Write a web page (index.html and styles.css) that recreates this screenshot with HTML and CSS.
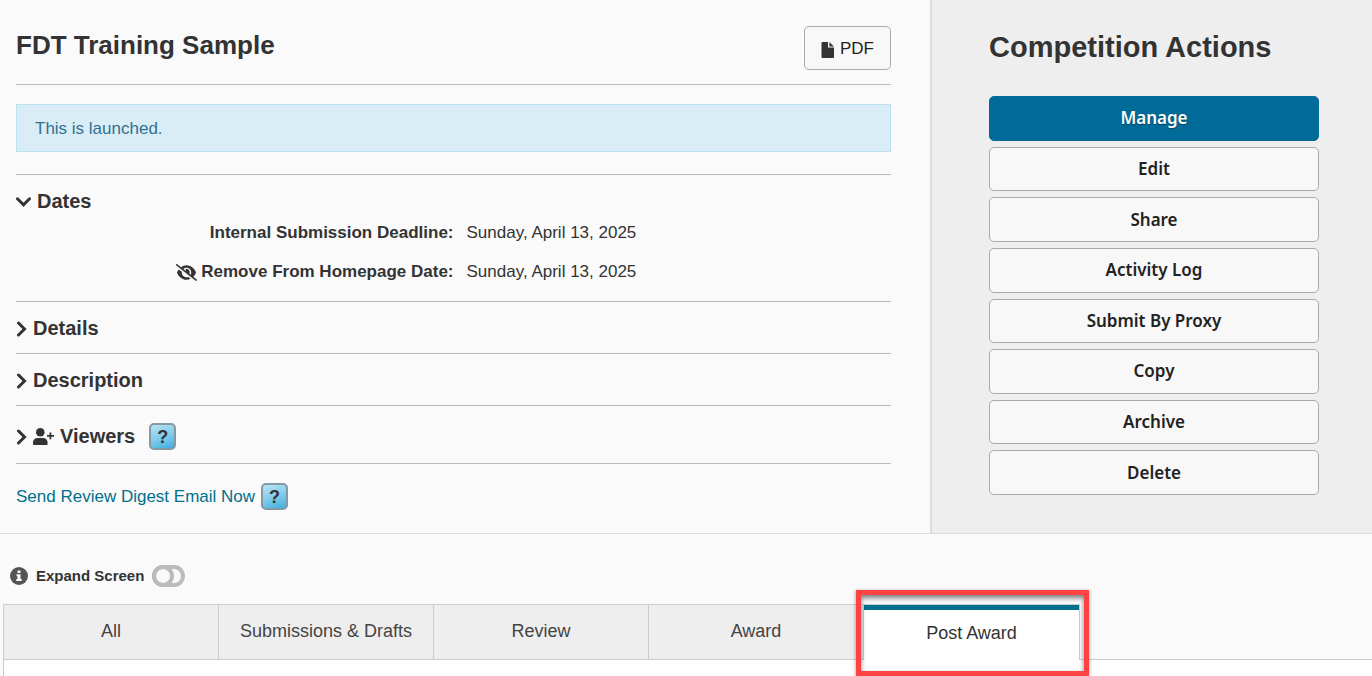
FILE: index.html
```html
<!DOCTYPE html>
<html lang="en">
<head>
    <meta charset="UTF-8">
    <meta name="viewport" content="width=device-width, initial-scale=1">
    <title>FDT Training Sample</title>
    <link rel="stylesheet" href="styles.css">
</head>
<body>
<div class="competition">
    <main class="overview">
        <header class="title-bar">
            <h1>FDT Training Sample</h1>
            <button type="button" class="btn btn-pdf">
                <svg class="icon-file" viewBox="0 0 13 16" aria-hidden="true">
                    <path d="M1.500 0H7v5.500h6v9.500a1 1 0 0 1-1 1H1.500a1 1 0 0 1-1-1V1a1 1 0 0 1 1-1z"/>
                    <path d="M8.300 0L13 4.400H8.300z"/>
                </svg>
                PDF
            </button>
        </header>

        <div class="alert">This is launched.</div>

        <section class="section section-dates">
            <h2>
                <svg class="chevron-down" viewBox="0 0 15 10" aria-hidden="true"><path d="M1.500 1.800l6 6 6-6"/></svg>
                Dates
            </h2>
            <dl class="dates">
                <dt>Internal Submission Deadline:</dt>
                <dd>Sunday, April 13, 2025</dd>
                <dt>
                    <svg class="icon-eye" viewBox="0 0 640 512" aria-hidden="true">
                        <path d="M39 5C28-3 13-1 5 9S-1 35 9 43l592 464c10 8 26 6 34-4s6-26-4-34L526 387c39-41 66-86 79-119 3-8 3-17 0-25-15-36-46-88-93-131C465 68 401 32 320 32c-68 0-125 26-169 61L39 5zm184 144c25-23 60-37 97-37 80 0 144 64 144 144 0 25-6 48-17 69l-38-30c9-23 11-50 3-77-13-50-62-81-111-74-5 1-7 6-5 11 2 6 3 13 3 21 0 10-2 20-7 29l-69-56zm150 241c-17 7-34 10-53 10-80 0-144-64-144-144 0-7 1-14 2-20l-95-74c-23 29-39 58-48 81-3 8-3 17 0 25 15 36 46 88 93 131 47 44 111 81 192 81 47 0 89-13 126-32l-73-58z"/>
                    </svg>
                    Remove From Homepage Date:
                </dt>
                <dd>Sunday, April 13, 2025</dd>
            </dl>
        </section>

        <section class="section">
            <h2>
                <svg class="chevron-right" viewBox="0 0 11 16" aria-hidden="true"><path d="M2.500 2l6 6-6 6"/></svg>
                Details
            </h2>
        </section>

        <section class="section">
            <h2>
                <svg class="chevron-right" viewBox="0 0 11 16" aria-hidden="true"><path d="M2.500 2l6 6-6 6"/></svg>
                Description
            </h2>
        </section>

        <section class="section section-viewers">
            <h2>
                <svg class="chevron-right" viewBox="0 0 11 16" aria-hidden="true"><path d="M2.500 2l6 6-6 6"/></svg>
                <svg class="icon-user" viewBox="0 0 21 17" aria-hidden="true">
                    <circle cx="7.300" cy="4.300" r="4.300"/>
                    <path d="M4.500 10h5.600a4.500 4.500 0 0 1 4.500 4.500V16a1 1 0 0 1-1 1H1a1 1 0 0 1-1-1v-1.500A4.500 4.500 0 0 1 4.500 10z"/>
                    <path d="M16.500 4.500v2.500H14v1.700h2.500v2.500h1.800V8.700H21V7h-2.700V4.500z"/>
                </svg>
                Viewers
            </h2>
            <button type="button" class="help" aria-label="Help with viewers">?</button>
        </section>

        <div class="digest">
            <a href="#">Send Review Digest Email Now</a>
            <button type="button" class="help" aria-label="Help with review digest">?</button>
        </div>
    </main>

    <aside class="actions">
        <h2>Competition Actions</h2>
        <div class="action-list">
            <button type="button" class="btn btn-primary">Manage</button>
            <button type="button" class="btn">Edit</button>
            <button type="button" class="btn">Share</button>
            <button type="button" class="btn">Activity Log</button>
            <button type="button" class="btn">Submit By Proxy</button>
            <button type="button" class="btn">Copy</button>
            <button type="button" class="btn">Archive</button>
            <button type="button" class="btn">Delete</button>
        </div>
    </aside>
</div>

<div class="expand">
    <svg class="icon-info" viewBox="0 0 18 18" aria-hidden="true">
        <circle cx="9" cy="9" r="9"/>
        <path d="M7.500 3.500h3v2.500h-3zM6.500 7.300h4v4.700h1.200v2H6.300v-2h1.200V9.300h-1z"/>
    </svg>
    <label for="expandScreen">Expand Screen</label>
    <input type="checkbox" id="expandScreen" class="toggle">
</div>

<nav class="tabs" role="tablist">
    <button type="button" role="tab" class="tab">All</button>
    <button type="button" role="tab" class="tab">Submissions &amp; Drafts</button>
    <button type="button" role="tab" class="tab">Review</button>
    <button type="button" role="tab" class="tab">Award</button>
    <div class="tab-current">
        <button type="button" role="tab" class="tab tab-active" aria-selected="true">Post Award</button>
        <span class="highlight"></span>
    </div>
</nav>
<div class="tab-panel"></div>
</body>
</html>
```

FILE: styles.css
```css
*, *::before {
    box-sizing: border-box;
}
body {
    margin: 0;
    min-height: 100vh;
    display: flex;
    flex-direction: column;
    background-color: #fafafa;
    color: #333;
    font-family: "Liberation Sans", Arial, sans-serif;
    font-size: 17px;
    line-height: 20px;
}
h1, h2, dl, dd {
    margin: 0;
}
svg {
    flex: none;
    fill: #333;
}
button {
    font: inherit;
    color: inherit;
    cursor: pointer;
}

/* top area */
.competition {
    display: flex;
    border-bottom: 1px solid #ddd;
}
.overview {
    flex: 1;
    padding: 26px 39px 23px 16px;
}
.title-bar {
    display: flex;
    justify-content: space-between;
    align-items: center;
    padding-bottom: 14px;
    border-bottom: 1px solid #bbb;
}
.title-bar h1 {
    padding-bottom: 6px;
    font-size: 26px;
    line-height: 32px;
}
.btn {
    padding: 0 16px;
    border: 1px solid #aaa;
    border-radius: 5px;
    background-color: #f8f8f8;
    color: #222;
}
.btn-pdf {
    display: flex;
    align-items: center;
    gap: 6px;
    height: 44px;
    padding-top: 2px;
}
.icon-file {
    width: 13px;
    height: 16px;
    margin-top: 2px;
}
.alert {
    margin: 19px 0 22px;
    padding: 14px 18px 12px;
    border: 1px solid #bce1f1;
    background-color: #d9edf6;
    color: #31708f;
}

/* collapsible sections */
.section {
    display: flex;
    align-items: center;
    gap: 14px;
    padding: 14px 0 12px;
    border-top: 1px solid #bbb;
}
.section h2 {
    display: flex;
    align-items: center;
    gap: 6px;
    font-size: 20px;
    line-height: 25px;
}
.section-dates {
    display: block;
    padding-bottom: 19px;
}
.section-viewers {
    padding: 17px 0 13px;
    border-bottom: 1px solid #bbb;
}
.chevron-down, .chevron-right {
    fill: none;
    stroke: #333;
    stroke-width: 3;
    stroke-linecap: round;
}
.chevron-down {
    width: 15px;
    height: 10px;
}
.chevron-right {
    width: 11px;
    height: 16px;
}
.icon-user {
    width: 21px;
    height: 17px;
}
.dates {
    display: grid;
    grid-template-columns: 1fr 1fr;
    row-gap: 19px;
    padding-top: 9px;
}
.dates dt {
    display: flex;
    justify-content: flex-end;
    align-items: center;
    gap: 4px;
    font-weight: bold;
}
.dates dd {
    padding-left: 13px;
}
.icon-eye {
    width: 21px;
    height: 17px;
}
.digest {
    display: flex;
    align-items: center;
    gap: 6px;
    padding-top: 19px;
}
.digest a {
    color: #00708c;
    text-decoration: none;
}
.help {
    width: 27px;
    height: 27px;
    padding: 0;
    border: 2px solid #8499a3;
    border-radius: 5px;
    background: linear-gradient(160deg, #c5e8f6, #7cc9eb 55%, #2fa8dd) border-box;
    color: #333;
    font-size: 18px;
    font-weight: bold;
    line-height: 20px;
}

/* sidebar */
.actions {
    flex: 0 0 442px;
    display: flex;
    flex-direction: column;
    padding: 30px 53px 38px 57px;
    border-left: 2px solid #ddd;
    background-color: #eee;
}
.actions h2 {
    margin-bottom: 32px;
    font-size: 29px;
    line-height: 34px;
}
.action-list {
    flex: 1;
    display: grid;
    grid-auto-rows: 1fr;
    gap: 6px;
}
.action-list .btn {
    font-family: "Noto Sans", sans-serif;
    font-weight: 600;
}
.action-list .btn-primary {
    border-color: #006b99;
    background-color: #006b99;
    color: #fff;
    text-shadow: 0 1px 1px #045;
}

/* expand switch */
.expand {
    display: flex;
    align-items: center;
    gap: 8px;
    padding: 31px 10px 17px;
    font-size: 15px;
    font-weight: bold;
}
.icon-info {
    width: 18px;
    height: 18px;
    fill: #555;
}
.icon-info path {
    fill: #fafafa;
}
.toggle {
    appearance: none;
    width: 33px;
    height: 22px;
    margin: 0;
    border: 4px solid #bbb;
    border-radius: 11px;
    cursor: pointer;
}
.toggle::before {
    content: "";
    display: block;
    width: 22px;
    height: 22px;
    margin: -4px;
    border: 4px solid #bbb;
    border-radius: 50%;
}
.toggle:checked::before {
    margin-left: 7px;
}

/* tabs */
.tabs {
    display: flex;
    margin-left: 3px;
    border-bottom: 1px solid #ccc;
}
.tab {
    width: 215px;
    height: 55px;
    padding: 0 0 2px;
    border: 1px solid #ccc;
    border-width: 1px 0 0 1px;
    background-color: #eee;
    color: #444;
    font-size: 18px;
}
.tab-current {
    position: relative;
    margin-bottom: -1px;
}
.tab-active {
    width: 217px;
    height: 56px;
    padding: 0;
    border-right-width: 1px;
    background-color: #fff;
    box-shadow: inset 0 5px #00708c;
    color: #333;
}
.highlight {
    position: absolute;
    top: -14px;
    left: -7px;
    width: 233px;
    height: 86px;
    border: 5px solid #ff4343;
    box-shadow: 0 1px 4px rgba(0, 0, 0, 0.4), inset 0 3px 5px rgba(0, 0, 0, 0.5);
    pointer-events: none;
}
.tab-panel {
    flex: 1;
    margin-left: 3px;
    border-left: 1px solid #ccc;
    background-color: #fff;
}
```
